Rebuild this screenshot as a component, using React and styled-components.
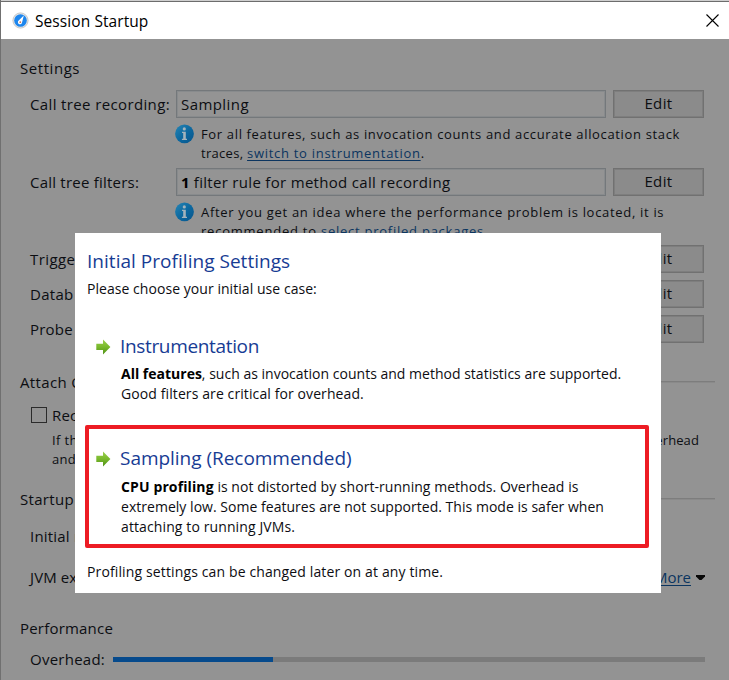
import React from 'react';
import styled, { createGlobalStyle } from 'styled-components';

const GlobalStyle = createGlobalStyle`
  * { box-sizing: border-box; }
  html, body { margin: 0; background: #939393; }
  body { font-family: "Open Sans", "Noto Sans", sans-serif; overflow: hidden; }
`;

const Window = styled.div`
  position: relative;
  width: 729px;
  height: 680px;
  overflow: hidden;
  display: flex;
  flex-direction: column;
  background: #939393;
  color: #0c0e12;
  border-left: 1px solid #707070;
`;

const TopEdge = styled.div`
  height: 2px;
  flex: none;
  background: #cfcfcf;
  border-bottom: 1px solid #6d6d6d;
`;

const TitleBar = styled.header`
  height: 37px;
  flex: none;
  display: flex;
  align-items: center;
  padding: 0 10px 0 11px;
  background: #fff;
  svg { flex: none; }
`;

const Title = styled.h1`
  flex: 1;
  margin: 0 0 0 6px;
  font-size: 15.5px;
  font-weight: 400;
  line-height: 20px;
  letter-spacing: 0.08px;
  color: #000;
`;

const Text = styled.span`
  font-size: ${p => p.$size || 15}px;
  letter-spacing: ${p => p.$ls || 0}px;
  white-space: pre;
`;

const Body = styled.main`
  display: flex;
  flex-direction: column;
  padding-left: 19px;
`;

const SectionHeading = styled.h2`
  display: flex;
  align-items: center;
  gap: 8px;
  height: 20px;
  margin: ${p => p.$top}px 14px 0 0;
  font-weight: 400;
  font-size: 15px;
  line-height: 20px;
`;

const Rule = styled.i`
  flex: 1;
  height: 2px;
  background: #7d7d7d;
  border-bottom: 1px solid #8a8a8a;
`;

const SettingRow = styled.div`
  display: grid;
  grid-template-columns: 139px 430px 91px;
  column-gap: 7px;
  align-items: center;
  height: 28px;
  margin: ${p => p.$top}px 0 0 10px;
  line-height: 20px;
`;

const Field = styled.div`
  height: 28px;
  display: flex;
  align-items: center;
  padding: 0 0 1px 4px;
  border: 1px solid #74787b;
  box-shadow: inset 0 0 0 1px #888b8d;
  background: #949494;
`;

const EditButton = styled.button`
  height: 28px;
  width: 91px;
  grid-column: 3;
  padding: 0 0 2px;
  border: 1px solid #717171;
  box-shadow: inset 0 0 0 1px #7e7e7e;
  background: #8b8b8b;
  color: #0c0e12;
  font-family: inherit;
  line-height: 20px;
`;

const Hint = styled.div`
  display: grid;
  grid-template-columns: 19px 1fr;
  column-gap: 7px;
  margin: ${p => p.$top}px 0 0 155px;
  height: 38px;
  line-height: 19px;
`;

const HintLine = styled.div`
  height: 19px;
  white-space: pre;
`;

const Link = styled(Text)`
  color: #0b3560;
  text-decoration: underline;
  text-underline-offset: 2px;
`;

const CheckRow = styled.div`
  display: flex;
  align-items: center;
  gap: 5px;
  height: 20px;
  margin: 13px 0 0 11px;
`;

const Checkbox = styled.span`
  width: 16px;
  height: 16px;
  border: 1px solid #2b2b2b;
`;

const NoteLine = styled.div`
  display: flex;
  justify-content: space-between;
  height: 19px;
  line-height: 19px;
  margin: ${p => p.$top || 0}px 30px 0 32px;
`;

const PlainRow = styled.div`
  display: flex;
  align-items: center;
  height: 20px;
  margin: ${p => p.$top}px 24px 0 10px;
  line-height: 20px;
`;

const MoreMenu = styled.div`
  display: flex;
  align-items: center;
  gap: 5px;
  margin-left: auto;
`;

const Track = styled.div`
  flex: 1;
  height: 5px;
  margin-left: 8px;
  background: #7b7b7b;
`;

const Fill = styled.div`
  height: 5px;
  width: 160px;
  background: #064a8c;
`;

const Dialog = styled.section`
  position: absolute;
  left: 74px;
  top: 233px;
  width: 586px;
  height: 360px;
  background: #fff;
  color: #0d0d12;
  display: flex;
  flex-direction: column;
`;

const DialogTitle = styled.h2`
  margin: 13px 0 0 12px;
  height: 26px;
  line-height: 26px;
  font-weight: 400;
  color: #173c94;
`;

const DialogText = styled.p`
  margin: ${p => p.$top}px 0 0 12px;
  height: 20px;
  line-height: 20px;
`;

const Choice = styled.div`
  display: grid;
  grid-template-columns: 24px 1fr;
  margin: ${p => (p.$marked ? '23px 12px 0 10px' : '22px 12px 0 10px')};
  padding: ${p => (p.$marked ? '16px 0 0 7px' : '13px 0 0 11px')};
  height: ${p => (p.$marked ? 123 : 82)}px;
  border: ${p => (p.$marked ? '4px solid #ed1c24' : '0')};
  border-radius: 2px;
`;

const ArrowCell = styled.div`
  padding-top: 5px;
`;

const ChoiceTitle = styled.h3`
  margin: 0 0 ${p => p.$gap}px;
  height: 26px;
  line-height: 26px;
  font-weight: 400;
  color: #173c94;
`;

const ChoiceLine = styled.div`
  height: 20px;
  line-height: 20px;
  padding-left: 1px;
  white-space: pre;
`;

const Strong = styled(Text)`
  font-weight: 700;
  color: #000;
`;

const InfoIcon = () => (
  <svg width="19" height="20" viewBox="0 0 19 20">
    <defs>
      <linearGradient id="info" x1="0" y1="0" x2="1" y2="1">
        <stop offset="0" stopColor="#2786b5" />
        <stop offset="0.5" stopColor="#0d69a0" />
        <stop offset="1" stopColor="#07558c" />
      </linearGradient>
    </defs>
    <circle cx="9.5" cy="9.8" r="9.4" fill="url(#info)" />
    <circle cx="9.3" cy="4.9" r="1.6" fill="#a3b3bc" />
    <path d="M7 7.7h3.8v7.1h1.2v1.2H6.9v-1.2h1.3V8.9H7z" fill="#a3b3bc" />
  </svg>
);

const ArrowIcon = () => (
  <svg width="15" height="16" viewBox="0 0 15 16">
    <defs>
      <linearGradient id="arrow" x1="0" y1="0" x2="0" y2="1">
        <stop offset="0" stopColor="#9bd04e" />
        <stop offset="0.5" stopColor="#79b92c" />
        <stop offset="1" stopColor="#4f9117" />
      </linearGradient>
    </defs>
    <path d="M.3 4.8H7V.4L14.4 8 7 15.5v-4.4H.3z" fill="url(#arrow)" />
  </svg>
);

const GaugeIcon = () => (
  <svg width="17" height="17" viewBox="0 0 17 17">
    <circle cx="8.5" cy="8.5" r="7.6" fill="#e9e7e4" stroke="#b9bdc2" strokeWidth=".8" />
    <circle cx="8.5" cy="8.5" r="6.3" fill="#1d86ee" />
    <path d="M11.8 3.4 10.1 10.2A2.1 2.1 0 1 1 6.7 8.6z" fill="#fff" />
    <circle cx="8.3" cy="10.2" r=".9" fill="#c9715f" />
  </svg>
);

const CloseIcon = () => (
  <svg width="13" height="13" viewBox="0 0 13 13">
    <path d="M.5.5l12 12M12.5.5l-12 12" stroke="#000" strokeWidth="1.1" />
  </svg>
);

const CaretIcon = () => (
  <svg width="9" height="5" viewBox="0 0 9 5">
    <path d="M0 0h9v1.5L5.5 5h-2L0 1.5z" fill="#080808" />
  </svg>
);

const Edit = () => (
  <EditButton><Text $ls={0.4}>Edit</Text></EditButton>
);

export default function App() {
  return (
    <>
      <GlobalStyle />
      <Window>
        <TopEdge />
        <TitleBar>
          <GaugeIcon />
          <Title>Session Startup</Title>
          <CloseIcon />
        </TitleBar>
        <Body>
          <SectionHeading $top={19}><Text $ls={0.55}>Settings</Text></SectionHeading>
          <SettingRow $top={12}>
            <Text $ls={0.37}>Call tree recording:</Text>
            <Field><Text $ls={0.43}>Sampling</Text></Field>
            <Edit />
          </SettingRow>
          <Hint $top={6}>
            <InfoIcon />
            <div>
              <HintLine><Text $size={13} $ls={0.65}>For all features, such as invocation counts and accurate allocation stack</Text></HintLine>
              <HintLine><Text $size={13} $ls={0.3}>traces, </Text><Link $size={13} $ls={0.71}>switch to instrumentation</Link><Text $size={13}>.</Text></HintLine>
            </div>
          </Hint>
          <SettingRow $top={6}>
            <Text $ls={0.22}>Call tree filters:</Text>
            <Field><Strong>1</Strong><Text $ls={0.31}> filter rule for method call recording</Text></Field>
            <Edit />
          </SettingRow>
          <Hint $top={6}>
            <InfoIcon />
            <div>
              <HintLine><Text $size={13} $ls={0.69}>After you get an idea where the performance problem is located, it is</Text></HintLine>
              <HintLine><Text $size={13} $ls={0.77}>recommended to </Text><Link $size={13} $ls={0.75}>select profiled packages</Link></HintLine>
            </div>
          </Hint>
          <SettingRow $top={5}><Text $ls={0.4}>Trigger</Text><Edit /></SettingRow>
          <SettingRow $top={7}><Text $ls={0.3}>Datab</Text><Edit /></SettingRow>
          <SettingRow $top={7}><Text $ls={0.2}>Probe</Text><Edit /></SettingRow>

          <SectionHeading $top={29}><Text $ls={0.35}>Attach Options</Text><Rule /></SectionHeading>
          <CheckRow><Checkbox /><Text $ls={0.2}>Record</Text></CheckRow>
          <NoteLine $top={6}><Text $size={13} $ls={0.4}>If the</Text><Text $size={13} $ls={0.1}>overhead</Text></NoteLine>
          <NoteLine><Text $size={13} $ls={0.3}>and</Text></NoteLine>

          <SectionHeading $top={20}><Text $ls={0.32}>Startup</Text><Rule /></SectionHeading>
          <PlainRow $top={17}><Text $ls={0.2}>Initial r</Text></PlainRow>
          <PlainRow $top={21}>
            <Text $ls={0.1}>JVM ex</Text>
            <MoreMenu><Link $ls={0}>More</Link><CaretIcon /></MoreMenu>
          </PlainRow>

          <SectionHeading $top={31}><Text $ls={0.2}>Performance</Text></SectionHeading>
          <PlainRow $top={11}>
            <Text $ls={0.25}>Overhead:</Text>
            <Track><Fill /></Track>
          </PlainRow>
        </Body>

        <Dialog>
          <DialogTitle><Text $size={19} $ls={0.03}>Initial Profiling Settings</Text></DialogTitle>
          <DialogText $top={6}><Text $size={14} $ls={0.05}>Please choose your initial use case:</Text></DialogText>
          <Choice>
            <ArrowCell><ArrowIcon /></ArrowCell>
            <div>
              <ChoiceTitle $gap={4}><Text $size={19} $ls={-0.34}>Instrumentation</Text></ChoiceTitle>
              <ChoiceLine><Strong $size={14}>All features</Strong><Text $size={14} $ls={0.01}>, such as invocation counts and method statistics are supported.</Text></ChoiceLine>
              <ChoiceLine><Text $size={14} $ls={0.1}>Good filters are critical for overhead.</Text></ChoiceLine>
            </div>
          </Choice>
          <Choice $marked>
            <ArrowCell><ArrowIcon /></ArrowCell>
            <div>
              <ChoiceTitle $gap={5}><Text $size={19} $ls={-0.03}>Sampling (Recommended)</Text></ChoiceTitle>
              <ChoiceLine><Strong $size={14} $ls={0.12}>CPU profiling</Strong><Text $size={14} $ls={0.04}> is not distorted by short-running methods. Overhead is</Text></ChoiceLine>
              <ChoiceLine><Text $size={14} $ls={0.03}>extremely low. Some features are not supported. This mode is safer when</Text></ChoiceLine>
              <ChoiceLine><Text $size={14} $ls={0.11}>attaching to running JVMs.</Text></ChoiceLine>
            </div>
          </Choice>
          <DialogText $top={13}><Text $size={14} $ls={0.13}>Profiling settings can be changed later on at any time.</Text></DialogText>
        </Dialog>
      </Window>
    </>
  );
}
